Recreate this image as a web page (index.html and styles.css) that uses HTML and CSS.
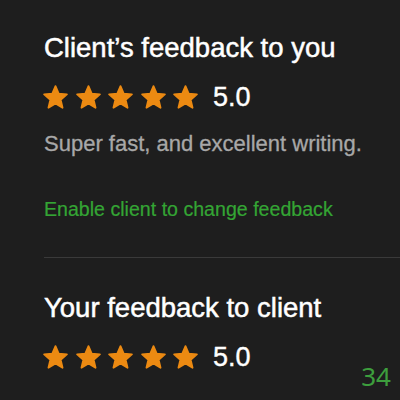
FILE: index.html
```html
<!DOCTYPE html>
<html lang="en">
<head>
  <meta charset="UTF-8" />
  <title>Feedback</title>
  <link rel="stylesheet" href="styles.css">
</head>
<body>

<svg width="0" height="0" style="position:absolute">
  <symbol id="star" viewBox="1 1 22 22">
    <path d="M12 17.27L18.18 21l-1.64-7.03L22 9.24l-7.19-.61L12 2 9.19 8.63 2 9.24l5.46 4.73L5.82 21z" />
  </symbol>
</svg>

<div class="feedback">
  <section class="block">
    <h2>Client’s feedback to you</h2>
    <div class="rating">
      <div class="stars">
        <svg><use href="#star" /></svg>
        <svg><use href="#star" /></svg>
        <svg><use href="#star" /></svg>
        <svg><use href="#star" /></svg>
        <svg><use href="#star" /></svg>
      </div>
      <span class="score">5.0</span>
    </div>
    <p class="comment">Super fast, and excellent writing.</p>
    <a class="action" href="#">Enable client to change feedback</a>
  </section>

  <hr class="divider">

  <section class="block">
    <h2>Your feedback to client</h2>
    <div class="rating">
      <div class="stars">
        <svg><use href="#star" /></svg>
        <svg><use href="#star" /></svg>
        <svg><use href="#star" /></svg>
        <svg><use href="#star" /></svg>
        <svg><use href="#star" /></svg>
      </div>
      <span class="score">5.0</span>
    </div>
  </section>
</div>

<div class="page-num">34</div>

</body>
</html>
```

FILE: styles.css
```css
body {
  background: #1e1e1e;
  color: #fff;
  font-family: 'Liberation Sans', Arial, sans-serif;
  margin: 0;
  height: 400px;
  overflow: hidden;
}
.feedback {
  padding: 32px 0 0 44px;
}
.block h2 {
  margin: 0;
  font-size: 27.5px;
  line-height: 32px;
  font-weight: 400;
  -webkit-text-stroke: 0.5px #fff;
}
.rating {
  display: flex;
  align-items: center;
  margin-top: 21px;
  height: 24px;
}
.stars {
  display: flex;
  gap: 7.5px;
  margin-left: -1px;
}
.stars svg {
  width: 25px;
  height: 25px;
  fill: #ec8a12;
  stroke: #ec8a12;
  stroke-width: 1.6;
  stroke-linejoin: round;
}
.score {
  margin-left: 15px;
  font-size: 27px;
  line-height: 24px;
  -webkit-text-stroke: 0.4px #fff;
}
.comment {
  margin: 21px 0 0;
  font-size: 22px;
  line-height: 28px;
  color: #a8a8a8;
  -webkit-text-stroke: 0.3px #a8a8a8;
}
.action {
  display: block;
  margin-top: 39px;
  font-size: 19.6px;
  line-height: 24px;
  color: #34a534;
  text-decoration: none;
  -webkit-text-stroke: 0.2px #34a534;
}
.divider {
  margin: 36px 0 0;
  border: none;
  border-top: 1px solid #3a3a3a;
}
.divider + .block {
  padding-top: 34px;
}
.page-num {
  position: absolute;
  right: 9px;
  bottom: 6px;
  font-family: 'Noto Sans', sans-serif;
  font-size: 26px;
  color: #3d9e3d;
}
```
